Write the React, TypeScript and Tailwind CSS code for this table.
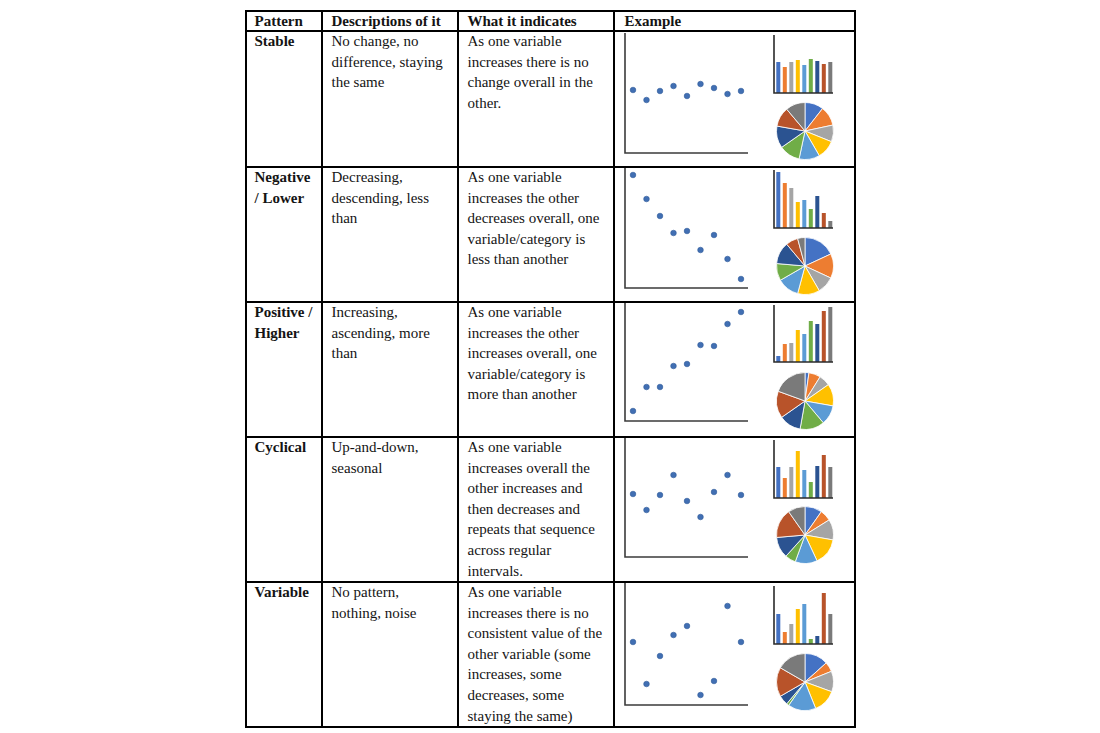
import React from 'react';

const COLORS = ['#4472C4', '#ED7D31', '#A5A5A5', '#FFC000', '#5B9BD5', '#70AD47', '#2B5391', '#B8532A', '#7A7A7A'];

type Row = {
  name: string[];
  desc: string[];
  what: string[];
  h: string;
  ax: [number, number];
  barAx: [number, number];
  pieY: number;
  dots: number[];
  bars: number[];
  pie: number[];
};

const rows: Row[] = [
  {
    name: ['Stable'],
    desc: ['No change, no', 'difference, staying', 'the same'],
    what: ['As one variable', 'increases there is no', 'change overall in the', 'other.'],
    h: 'h-[136px]',
    ax: [2, 122],
    barAx: [4, 62],
    pieY: 100,
    dots: [59, 69, 60, 55, 65, 53, 57, 63, 60],
    bars: [31, 36, 31, 29, 34, 28, 30, 33, 31],
    pie: [0, 38, 78, 112, 150, 192, 235, 280, 320, 360],
  },
  {
    name: ['Negative', '/ Lower'],
    desc: ['Decreasing,', 'descending, less', 'than'],
    what: ['As one variable', 'increases the other', 'decreases overall, one', 'variable/category is', 'less than another'],
    h: 'h-[135px]',
    ax: [1, 121],
    barAx: [3, 61],
    pieY: 99,
    dots: [8, 32, 49, 66, 64, 83, 68, 92, 112],
    bars: [5, 16, 21, 35, 33, 42, 29, 46, 54],
    pie: [0, 65, 115, 150, 195, 240, 275, 320, 345, 360],
  },
  {
    name: ['Positive /', 'Higher'],
    desc: ['Increasing,', 'ascending, more', 'than'],
    what: ['As one variable', 'increases the other', 'increases overall, one', 'variable/category is', 'more than another'],
    h: 'h-[135px]',
    ax: [1, 119],
    barAx: [3, 60],
    pieY: 99,
    dots: [109, 85, 85, 64, 62, 43, 44, 22, 10],
    bars: [54, 42, 41, 28, 32, 19, 22, 9, 5],
    pie: [0, 8, 32, 55, 100, 140, 190, 235, 290, 360],
  },
  {
    name: ['Cyclical'],
    desc: ['Up-and-down,', 'seasonal'],
    what: ['As one variable', 'increases overall the', 'other increases and', 'then decreases and', 'repeats that sequence', 'across regular', 'intervals.'],
    h: 'h-[145px]',
    ax: [1, 120],
    barAx: [3, 61],
    pieY: 98,
    dots: [57, 73, 58, 38, 64, 80, 55, 38, 58],
    bars: [30, 41, 30, 14, 33, 45, 29, 18, 30],
    pie: [0, 35, 58, 100, 155, 200, 222, 265, 325, 360],
  },
  {
    name: ['Variable'],
    desc: ['No pattern,', 'nothing, noise'],
    what: ['As one variable', 'increases there is no', 'consistent value of the', 'other variable (some', 'increases, some', 'decreases, some', 'staying the same)'],
    h: 'h-[143px]',
    ax: [1, 123],
    barAx: [4, 62],
    pieY: 100,
    dots: [60, 102, 74, 53, 44, 113, 99, 24, 60],
    bars: [32, 50, 42, 27, 22, 57, 54, 11, 32],
    pie: [0, 48, 68, 110, 158, 215, 220, 240, 300, 360],
  },
];

function slice(cx: number, cy: number, r: number, a0: number, a1: number) {
  const p = (a: number) => {
    const t = ((a - 90) * Math.PI) / 180;
    return `${(cx + r * Math.cos(t)).toFixed(2)} ${(cy + r * Math.sin(t)).toFixed(2)}`;
  };
  const large = a1 - a0 > 180 ? 1 : 0;
  return `M ${cx} ${cy} L ${p(a0)} A ${r} ${r} 0 ${large} 1 ${p(a1)} Z`;
}

function Example({ row }: { row: Row }) {
  return (
    <svg width="239" height="145" className="block overflow-visible">
      <g transform="translate(0,-1)">
        {/* scatter */}
        <path d={`M10 ${row.ax[0]} V${row.ax[1]} H133`} fill="none" stroke="#3b3b3b" strokeWidth="1.6" />
        {row.dots.map((y, i) => (
          <circle key={i} cx={18 + i * 13.5} cy={y} r="2.8" fill="#416fb3" stroke="#2f5a99" strokeWidth="0.6" />
        ))}
        {/* bars */}
        {row.bars.map((y, i) => (
          <rect key={i} x={161.3 + i * 6.5} y={y} width="4" height={row.barAx[1] - y} fill={COLORS[i]} />
        ))}
        <path d={`M159 ${row.barAx[0]} V${row.barAx[1]} H218`} fill="none" stroke="#2b2b2b" strokeWidth="1.6" />
        {/* pie */}
        {COLORS.map((c, i) =>
          row.pie[i + 1] > row.pie[i] ? (
            <path key={i} d={slice(190, row.pieY, 28.5, row.pie[i], row.pie[i + 1])} fill={c} stroke="#ffffff" strokeWidth="0.8" />
          ) : null
        )}
      </g>
    </svg>
  );
}

function Lines({ lines }: { lines: string[] }) {
  return (
    <div className="-mt-px">
      {lines.map((l, i) => (
        <div key={i} className="whitespace-nowrap">
          {l}
        </div>
      ))}
    </div>
  );
}

const cols = 'grid grid-cols-[76px_136px_156px_239px]';

export default function App() {
  return (
    <div className="min-h-[733px] bg-white pt-[10px] text-[15px] leading-[20.6px] text-[#141414] [font-family:'Liberation_Serif','Times_New_Roman',serif]">
      <div className="mx-auto w-[611px] border-2 border-black">
        <div className={`${cols} h-[20px] border-b-2 border-black font-bold leading-[18px]`}>
          <div className="border-r-2 border-black pl-2">Pattern</div>
          <div className="border-r-2 border-black pl-[9px]">Descriptions of it</div>
          <div className="border-r-2 border-black pl-[9px]">What it indicates</div>
          <div className="pl-[10px]">Example</div>
        </div>
        {rows.map((row, i) => (
          <div key={i} className={`${cols} ${row.h} ${i < rows.length - 1 ? 'border-b-2 border-black' : ''}`}>
            <div className="border-r-2 border-black pl-2 font-bold">
              <Lines lines={row.name} />
            </div>
            <div className="border-r-2 border-black pl-[9px]">
              <Lines lines={row.desc} />
            </div>
            <div className="border-r-2 border-black pl-[9px]">
              <Lines lines={row.what} />
            </div>
            <div>
              <Example row={row} />
            </div>
          </div>
        ))}
      </div>
    </div>
  );
}
